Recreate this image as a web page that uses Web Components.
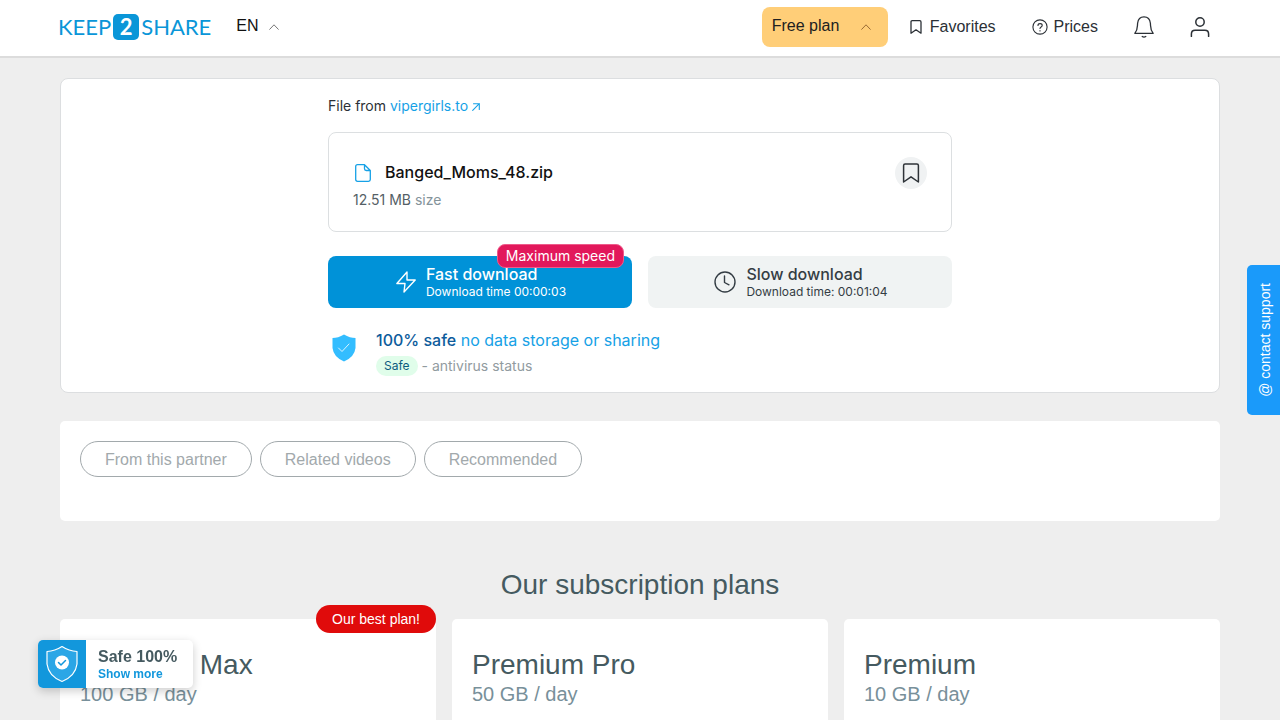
<!DOCTYPE html>
<html lang="en">
<head>
<meta charset="utf-8">
<meta name="viewport" content="width=device-width, initial-scale=1">
<title>Keep2Share</title>
<style>
  body { margin: 0; background: #eee; font: 16px/20px "Liberation Sans", Arial, sans-serif; color: #2b3036; }
</style>
</head>
<body>
<k2s-app></k2s-app>
<script>
function define(name, css, html) {
  const template = document.createElement('template');
  template.innerHTML = `<style>
    *, *::before { box-sizing: border-box; }
    button, select, a { font: inherit; color: inherit; text-decoration: none; }
    button { border: 0; margin: 0; padding: 0; background: none; cursor: pointer; }
    ${css}</style>${html}`;
  customElements.define(name, class extends HTMLElement {
    constructor() {
      super();
      this.attachShadow({ mode: 'open' }).append(template.content.cloneNode(true));
    }
  });
}

const ICONS = {
  chevron: [10, 6, '<path d="M.7 5.3 5 .8l4.3 4.5"/>', 1],
  bookmark: [12, 14, '<path d="M1 13.2V2Q1 .7 2.2.7h7.6Q11 .7 11 2v11.2L6 9.8z"/>', 1.3],
  bookmarkBig: [18, 20, '<path d="M1.6 19V2.5Q1.6 1 3.1 1h11.8q1.5 0 1.5 1.5V19L9 13.8z"/>', 1.5],
  question: [16, 16, '<circle cx="8" cy="8" r="7.1"/><path d="M6 6.5C6 4 10.2 4 10.2 6.5 10.2 8 8 8 8 9.5M8 11.5v.5"/>', 1.1],
  bell: [20, 22, '<path d="M.8 17.3C4 13.5 3.3 10.5 3.6 7.2 4 3.3 6.5.8 10 .8s6 2.5 6.4 6.4C16.7 10.5 16 13.5 19.2 17.3z"/><path d="M8.2 20.5q1.8 1.2 3.6 0"/>', 1.3],
  user: [20, 20, '<circle cx="10" cy="5" r="4.2"/><path d="M1.4 19.4V17q0-3.700 3.700-3.700h9.800q3.700 0 3.700 3.700v2.400"/>', 1.5],
  external: [8, 8, '<path d="M.7 7.3 7.3.7M1.5.7h5.8v5.8"/>', 1.1],
  file: [16, 18, '<path d="M2.500.7h7L15.300 6.500V15.500q0 1.800-1.800 1.800h-11Q.7 17.300.7 15.500v-13Q.7.700 2.500.7zM9.500.7v4q0 1.800 1.800 1.800h4"/>', 1.3],
  bolt: [20, 22, '<path d="M11 1 .9 12.500H9L8 21 19.200 9H11z"/>', 1.4],
  clock: [22, 22, '<circle cx="11" cy="11" r="10"/><path d="M10.500 5v6.500l4.500 2.300"/>', 1.4],
  shield: [24, 28, '<path d="M12 .5Q18 4 23.500 4V14Q22.500 23 12 27.500 1.500 23 .5 14V4Q6 4 12 .5z" fill="#33bdff" stroke="none"/><path d="m6.500 14 3.500 3.500 7-7.500" stroke="#d9f4ff"/>', 1],
  guard: [32, 38, '<path d="M16 1.500Q23 6 31 6.500V19Q29.500 31 16 36.500 2.500 31 1 19V6.500Q9 6 16 1.500z" fill="#43b5f0" fill-opacity=".5"/><circle cx="16" cy="17.500" r="7" fill="#fff" stroke="none"/><path d="m12.500 17.500 2.500 2.500 4.500-4.500" stroke="#1297dc" stroke-width="1.500"/>', 1.2]
};
customElements.define('k2s-icon', class extends HTMLElement {
  connectedCallback() {
    if (this.shadowRoot) return;
    const [w, h, body, stroke] = ICONS[this.getAttribute('name')];
    this.attachShadow({ mode: 'open' }).innerHTML =
      `<style>:host{display:inline-flex;flex:none}svg{display:block}</style>
       <svg width="${w}" height="${h}" viewBox="0 0 ${w} ${h}" fill="none" stroke="currentColor" stroke-width="${stroke}" stroke-linecap="round" stroke-linejoin="round" aria-hidden="true">${body}</svg>`;
  }
});

define('k2s-logo', `
  :host { display: block; }
  a { display: flex; align-items: center; gap: 2px; color: #0a96d8; font: 22px/26px Lato, sans-serif; }
  b { width: 26px; text-align: center; border-radius: 5px; background: #0a96d8; color: #fff; font-weight: 700; }
`, `<a href="#" aria-label="Keep2Share"><span>KEEP</span><b>2</b><span>SHARE</span></a>`);

define('k2s-header', `
  :host { display: block; background: #fff; border-bottom: 2px solid #dcdcdc; }
  header { display: flex; align-items: center; min-height: 56px; padding: 0 70px 2px 58px; }
  .lang { display: flex; align-items: center; gap: 10px; margin-left: 25px; }
  .lang k2s-icon { color: #777; }
  select { appearance: none; border: 0; padding: 0 0 2px; background: none; color: #111; }
  nav { display: flex; align-items: center; margin-left: auto; }
  nav > button { display: flex; }
  .plan { align-items: center; justify-content: space-between; width: 126px; height: 40px;
    padding: 0 17px 0 10px; margin-right: 22px; border-radius: 8px; background: #ffce78; color: #212121; }
  .plan span { padding-bottom: 2px; }
  .plan k2s-icon { color: #9a6b35; }
  .link { display: flex; align-items: center; gap: 8px; margin-right: 36px; }
  .prices { gap: 6px; }
  .bell { margin-right: 36px; }
`, `<header>
  <k2s-logo></k2s-logo>
  <label class="lang"><select aria-label="Language"><option>EN</option></select><k2s-icon name="chevron"></k2s-icon></label>
  <nav>
    <button class="plan" aria-haspopup="menu"><span>Free plan</span><k2s-icon name="chevron"></k2s-icon></button>
    <a class="link" href="#"><k2s-icon name="bookmark"></k2s-icon><span>Favorites</span></a>
    <a class="link prices" href="#"><k2s-icon name="question"></k2s-icon><span>Prices</span></a>
    <button class="bell" aria-label="Notifications"><k2s-icon name="bell"></k2s-icon></button>
    <button aria-label="Account"><k2s-icon name="user"></k2s-icon></button>
  </nav>
</header>`);

define('k2s-file-card', `
  :host { display: flex; justify-content: space-between; align-items: flex-start; padding: 24px 24px 20px; border: 1px solid #dcdfe1; border-radius: 8px; }
  .name { display: flex; align-items: center; gap: 14px; height: 32px; padding-left: 2px; color: #16a1e6; }
  h1 { margin: 0; padding-bottom: 2px; font-size: 16px; line-height: 24px; font-weight: 500; color: #111; }
  p { margin: 0; font-size: 14px; line-height: 22px; color: #555f66; }
  p span { color: #84939a; }
  button { display: flex; align-items: center; justify-content: center; width: 32px; height: 32px; border-radius: 50%; background: #f0f2f3; color: #2e3338; }
`, `<div><div class="name"><k2s-icon name="file"></k2s-icon><h1><slot name="name"></slot></h1></div>
  <p><slot name="size"></slot> <span>size</span></p></div>
  <button aria-label="Add to favorites"><k2s-icon name="bookmarkBig"></k2s-icon></button>`);

define('k2s-download', `
  :host { display: block; position: relative; flex: 1; }
  button { display: flex; align-items: center; justify-content: center; gap: 10px; width: 100%; height: 52px; padding-left: 2px;
    border-radius: 8px; background: #f0f3f3; color: #343d44; text-align: left; }
  :host([fast]) button { background: #0092d8; color: #fff; }
  strong, small { display: block; }
  strong { font-size: 16px; line-height: 20px; font-weight: 500; }
  small { font-size: 12px; line-height: 16px; }
  ::slotted([slot=badge]) { position: absolute; right: 8px; top: -12px; padding: 0 8px; border: 1px solid #ee5b8a;
    border-radius: 8px; background: #e2185b; color: #fff; font-size: 14px; line-height: 22px; }
`, `<button><slot name="icon"></slot><span><strong><slot></slot></strong><small><slot name="time"></slot></small></span></button><slot name="badge"></slot>`);

define('k2s-safe-note', `
  :host { display: flex; align-items: flex-start; gap: 20px; padding: 0 4px; }
  k2s-icon { margin-top: 6px; }
  p { margin: 0; }
  .lead { font-size: 16px; line-height: 24px; color: #16a1e6; }
  .lead b { font-weight: 500; color: #0d5c9c; }
  .status { display: flex; align-items: center; gap: 4px; margin-top: 4px; font-size: 14px; line-height: 20px; color: #919b9f; }
  mark { padding: 0 8px; border-radius: 10px; background: #e0fdea; color: #0d5c80; font-size: 12px; }
`, `<k2s-icon name="shield"></k2s-icon><div>
  <p class="lead"><b>100% safe</b> no data storage or sharing</p>
  <p class="status"><mark>Safe</mark><span>- antivirus status</span></p></div>`);

define('k2s-download-panel', `
  :host { display: block; padding: 16px 20px; border: 1px solid #dcdee0; border-radius: 8px; background: #fff; font-family: Inter, sans-serif; }
  .column { display: flex; flex-direction: column; max-width: 624px; margin: 0 auto; }
  .source { margin: 0 0 16px; font-size: 14px; line-height: 21px; }
  .source a { color: #16a1e6; }
  .buttons { display: flex; gap: 16px; margin: 24px 0 20px; }
`, `<div class="column">
  <p class="source">File from <a href="#">vipergirls.to <k2s-icon name="external"></k2s-icon></a></p>
  <k2s-file-card><span slot="name">Banged_Moms_48.zip</span><span slot="size">12.51 MB</span></k2s-file-card>
  <div class="buttons">
    <k2s-download fast><k2s-icon slot="icon" name="bolt"></k2s-icon>Fast download<span slot="time">Download time 00:00:03</span><span slot="badge">Maximum speed</span></k2s-download>
    <k2s-download><k2s-icon slot="icon" name="clock"></k2s-icon>Slow download<span slot="time">Download time: 00:01:04</span></k2s-download>
  </div>
  <k2s-safe-note></k2s-safe-note>
</div>`);

define('k2s-related', `
  :host { display: flex; gap: 8px; padding: 20px 20px 44px; border-radius: 5px; background: #fff; }
  button { height: 36px; padding: 2px 24px 0; border: 1px solid #a2a9ac; border-radius: 18px; color: #a2a9ac; }
`, `<button>From this partner</button><button>Related videos</button><button>Recommended</button>`);

define('k2s-plan', `
  :host { display: block; position: relative; min-height: 240px; padding: 30px 20px; border-radius: 5px; background: #fff; }
  h3 { margin: 0; font-size: 28px; line-height: 32px; font-weight: 400; color: #455a60; }
  p { margin: 0; font-size: 20px; line-height: 26px; color: #78909a; }
  ::slotted([slot=badge]) { position: absolute; right: 0; top: -14px; padding: 0 16px; border-radius: 14px; background: #e00b0b; color: #fff; font-size: 14px; line-height: 28px; }
`, `<slot name="badge"></slot><h3><slot></slot></h3><p><slot name="quota"></slot></p>`);

define('k2s-plans', `
  :host { display: block; }
  h2 { margin: 0 0 18px; font-size: 28px; line-height: 32px; font-weight: 400; text-align: center; color: #455a60; }
  .grid { display: grid; grid-template-columns: repeat(3, 1fr); gap: 16px; }
`, `<h2>Our subscription plans</h2><div class="grid">
  <k2s-plan>Premium Max<span slot="quota">100 GB / day</span><span slot="badge">Our best plan!</span></k2s-plan>
  <k2s-plan>Premium Pro<span slot="quota">50 GB / day</span></k2s-plan>
  <k2s-plan>Premium<span slot="quota">10 GB / day</span></k2s-plan></div>`);

define('k2s-support', `
  :host { position: fixed; right: 0; top: 265px; }
  a { display: block; padding: 18px 5px 18px 8px; border-radius: 5px 0 0 5px; background: #1a9afa; color: #fff; font-size: 14px; line-height: 20px; writing-mode: sideways-lr; }
`, `<a href="#">@ contact support</a>`);

define('k2s-safe-widget', `
  :host { position: fixed; left: 38px; bottom: 32px; display: flex; border-radius: 5px; overflow: hidden; background: #fff; box-shadow: 0 3px 10px #0003; }
  .icon { display: flex; align-items: center; justify-content: center; width: 48px; height: 48px; background: #1297dc; color: #fff; }
  .text { display: flex; flex-direction: column; justify-content: center; padding: 2px 16px 0 12px; font-weight: 700; }
  span { font-size: 16px; line-height: 18px; color: #455a60; }
  a { font-size: 12px; line-height: 16px; color: #1297dc; }
`, `<div class="icon"><k2s-icon name="guard"></k2s-icon></div><div class="text"><span>Safe 100%</span><a href="#">Show more</a></div>`);

define('k2s-app', `
  :host { display: block; }
  main { display: flex; flex-direction: column; max-width: 1160px; margin: 0 auto; padding: 20px 0 40px; }
  k2s-related { margin: 28px 0 48px; }
`, `<k2s-header></k2s-header>
<main><k2s-download-panel></k2s-download-panel><k2s-related></k2s-related><k2s-plans></k2s-plans></main>
<k2s-support></k2s-support><k2s-safe-widget></k2s-safe-widget>`);
</script>
</body>
</html>
